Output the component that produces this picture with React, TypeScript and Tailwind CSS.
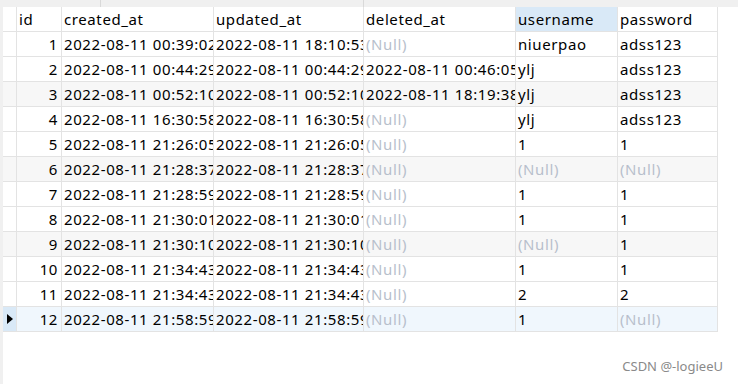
import React from "react";

type Cell = string | null;
const rows: Cell[][] = [
  ["1", "2022-08-11 00:39:02", "2022-08-11 18:10:53", null, "niuerpao", "adss123"],
  ["2", "2022-08-11 00:44:29", "2022-08-11 00:44:29", "2022-08-11 00:46:05", "ylj", "adss123"],
  ["3", "2022-08-11 00:52:10", "2022-08-11 00:52:10", "2022-08-11 18:19:38", "ylj", "adss123"],
  ["4", "2022-08-11 16:30:58", "2022-08-11 16:30:58", null, "ylj", "adss123"],
  ["5", "2022-08-11 21:26:05", "2022-08-11 21:26:05", null, "1", "1"],
  ["6", "2022-08-11 21:28:37", "2022-08-11 21:28:37", null, null, null],
  ["7", "2022-08-11 21:28:59", "2022-08-11 21:28:59", null, "1", "1"],
  ["8", "2022-08-11 21:30:01", "2022-08-11 21:30:01", null, "1", "1"],
  ["9", "2022-08-11 21:30:10", "2022-08-11 21:30:10", null, null, "1"],
  ["10", "2022-08-11 21:34:43", "2022-08-11 21:34:43", null, "1", "1"],
  ["11", "2022-08-11 21:34:43", "2022-08-11 21:34:43", null, "2", "2"],
  ["12", "2022-08-11 21:58:59", "2022-08-11 21:58:59", null, "1", null],
];

const widths = ["w-[45px]", "w-[152px]", "w-[150px]", "w-[152px]", "w-[102px]", "w-[100px]"];
const headers = ["id", "created_at", "updated_at", "deleted_at", "username", "password"];

export default function App() {
  return (
    <div
      className="relative w-[738px] h-[384px] bg-white flex flex-col overflow-hidden text-black"
      style={{ fontFamily: '"Noto Sans", "Open Sans", sans-serif' }}
    >
      <div className="h-[7px] bg-[#f0f0f0] flex shrink-0">
        <div className="w-[100px]" />
        <div className="w-[263px] border-l border-[#d9d9d9]" />
        <div className="border-l border-[#d9d9d9]" />
      </div>
      <div className="flex flex-1">
        <div className="w-[3px] bg-[#f0f0f0]" />
        <div className="flex flex-col">
          <div className="flex h-[25px] text-[15px] leading-none tracking-[0.6px]">
            <div className="w-[14px] border-r border-b border-[#e3e3e3]" />
            {headers.map((h, i) => (
              <div
                key={h}
                className={`${widths[i]} border-r border-b border-[#e3e3e3] flex items-center pl-[2px] overflow-hidden whitespace-nowrap ${
                  i === 4 ? "bg-[#d9e9f7]" : ""
                }`}
              >
                {h}
              </div>
            ))}
          </div>
          {rows.map((r, ri) => {
            const selected = ri === 11;
            const gray = ri === 2 || ri === 5 || ri === 8;
            const bg = selected ? "bg-[#f0f7fd]" : gray ? "bg-[#f7f7f7]" : "bg-white";
            return (
              <div key={ri} className={`flex h-[25px] text-[15px] leading-none tracking-[0.6px] ${bg}`}>
                <div
                  className={`w-[14px] border-r border-b border-[#e3e3e3] flex items-center justify-center ${
                    selected ? "bg-[#d9e9f7]" : ""
                  }`}
                >
                  {selected && (
                    <svg width="6" height="10" viewBox="0 0 6 10">
                      <path d="M0 0 L6 5 L0 10 Z" fill="#000" />
                    </svg>
                  )}
                </div>
                {r.map((c, ci) => (
                  <div
                    key={ci}
                    className={`${widths[ci]} border-r border-b border-[#e3e3e3] flex items-center overflow-hidden whitespace-nowrap ${
                      ci === 0 ? "justify-end pr-[3px]" : "pl-[2px]"
                    } ${c === null ? "text-[#b8bfcc]" : ""}`}
                  >
                    {c === null ? "(Null)" : c}
                  </div>
                ))}
              </div>
            );
          })}
        </div>
      </div>
      <div className="absolute right-[15px] top-[360px] text-[13px] text-[#8a8a8a] leading-none">
        CSDN @-logieeU
      </div>
    </div>
  );
}
